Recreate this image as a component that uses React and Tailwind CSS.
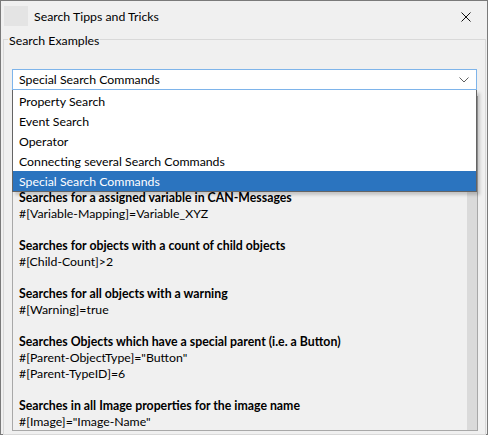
export default function App() {
  const options = [
    "Property Search",
    "Event Search",
    "Operator",
    "Connecting several Search Commands",
    "Special Search Commands",
  ];

  const lines = [
    { t: "Searches for a assigned variable in CAN-Messages", b: true },
    { t: "#[Variable-Mapping]=Variable_XYZ" },
    { t: "" },
    { t: "Searches for objects with a count of child objects", b: true },
    { t: "#[Child-Count]>2" },
    { t: "" },
    { t: "Searches for all objects with a warning", b: true },
    { t: "#[Warning]=true" },
    { t: "" },
    { t: "Searches Objects which have a special parent (i.e. a Button)", b: true },
    { t: '#[Parent-ObjectType]="Button"' },
    { t: "#[Parent-TypeID]=6" },
    { t: "" },
    { t: "Searches in all Image properties for the image name", b: true },
    { t: '#[Image]="Image-Name"' },
  ];

  return (
    <div className="w-[489px] h-[436px] bg-white">
      <div className="w-[488px] h-[435px] border border-[#7a7a7a] bg-[#f0f0f0] flex flex-col font-['Lato',sans-serif] text-[12.3px] text-black">
        {/* title bar */}
        <div className="h-[30px] flex items-center shrink-0 pt-[2px]">
          <div className="ml-[3px] -mt-[2px] w-[24px] h-[20px] bg-[#e4e4e4]" />
          <span className="ml-[6px] leading-[16px]">Search Tipps and Tricks</span>
          <svg className="ml-auto mr-[16px]" width="10" height="10" viewBox="0 0 10 10">
            <path d="M0.5 0.5 L9.5 9.5 M9.5 0.5 L0.5 9.5" stroke="#111" strokeWidth="1" fill="none" />
          </svg>
        </div>

        {/* group box */}
        <div className="relative ml-[2px] mr-[1px] mt-[8px] mb-[1px] flex-1 border border-[#d9d9d9] flex flex-col">
          <span className="absolute -top-[8px] left-[4px] px-[1px] bg-[#f0f0f0] leading-[16px] pt-[1px]">
            Search Examples
          </span>

          {/* combobox */}
          <div className="relative mt-[29px] mx-[8px] h-[21px] shrink-0">
            <div className="h-full border border-[#7eb4ea] bg-white flex items-center pl-[6px] pr-[6px]">
              <span className="leading-[16px] pt-[1px]">Special Search Commands</span>
              <svg className="ml-auto mr-[1px]" width="10" height="6" viewBox="0 0 10 6">
                <path d="M0.5 0.5 L5 5 L9.5 0.5" stroke="#606060" strokeWidth="1" fill="none" />
              </svg>
            </div>

            {/* dropdown list */}
            <div className="absolute left-0 right-0 top-full z-10 bg-white border border-t-0 border-[#646464] pt-[1px] shadow-[3px_3px_3px_rgba(0,0,0,0.18)]">
              {options.map((o, i) => (
                <div
                  key={o}
                  className={
                    i === options.length - 1
                      ? "h-[20px] leading-[20px] pt-[1px] pl-[6px] bg-[#2b74bf] text-white"
                      : "h-[20px] leading-[20px] pt-[1px] pl-[6px]"
                  }
                >
                  {o}
                </div>
              ))}
            </div>
          </div>

          {/* text panel */}
          <div className="mt-[6px] ml-[8px] mr-[7px] mb-[3px] flex-1 border border-[#a8a8a8] flex overflow-hidden">
            <div className="flex-1 pl-[6px] pt-[93px] overflow-hidden">
              {lines.map((l, i) => (
                <div
                  key={i}
                  className={l.b ? "h-[16px] leading-[16px] font-bold whitespace-nowrap" : "h-[16px] leading-[16px] whitespace-nowrap"}
                >
                  {l.t}
                </div>
              ))}
            </div>
            <div className="w-[10px] bg-[#dadada]" />
          </div>
        </div>
      </div>
    </div>
  );
}
